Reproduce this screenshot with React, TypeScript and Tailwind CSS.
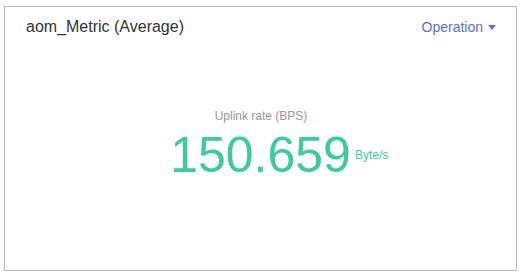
export default function App() {
  return (
    <div className="w-[521px] h-[276px] bg-white pt-[6px] pl-[4px]" style={{ fontFamily: '"Liberation Sans", Arial, sans-serif' }}>
      <div className="w-[513px] h-[265px] border border-[#b9b9b9] flex flex-col">
        <div className="flex items-center justify-between pl-[21px] pr-[20px] pt-[9px] h-[31px]">
          <span className="text-[16px] text-[#333333]">aom_Metric (Average)</span>
          <span className="flex items-center text-[14px] text-[#5a6fd8]">
            Operation
            <svg width="8" height="5" viewBox="0 0 8 5" className="ml-[5px]"><path d="M0 0H8L4 5Z" fill="#5a6fd8" /></svg>
          </span>
        </div>
        <div className="flex flex-col items-center pt-[70px]">
          <div className="text-[12px] leading-[16px] text-[#999999] pl-[1px]">Uplink rate (BPS)</div>
          <div className="relative mt-[6px]">
            <span className="block text-[50px] leading-[50px] text-[#3fc9a1]">150.659</span>
            <span className="absolute left-full top-[17px] ml-[4px] text-[12px] leading-[16px] text-[#3fc9a1] whitespace-nowrap">Byte/s</span>
          </div>
        </div>
      </div>
    </div>
  );
}
